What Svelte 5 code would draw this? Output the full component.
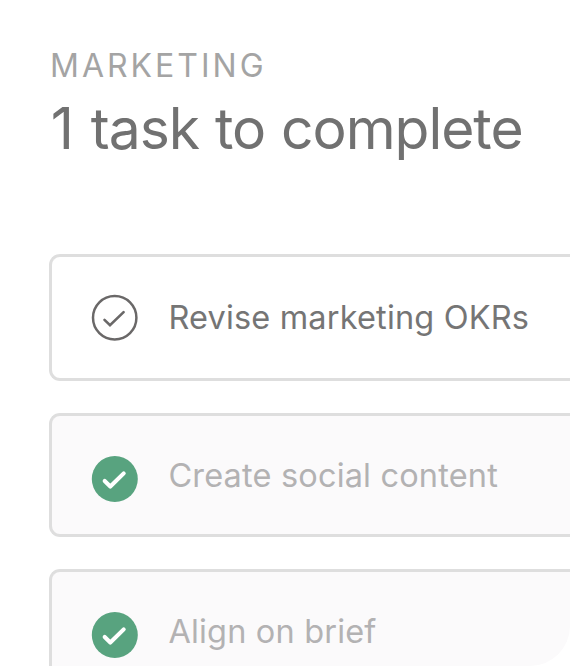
<script>
  const category = 'MARKETING';
  const tasks = [
    { title: 'Revise marketing OKRs', done: false },
    { title: 'Create social content', done: true },
    { title: 'Align on brief', done: true }
  ];
  const remaining = tasks.filter((task) => !task.done).length;
</script>

<main class="panel">
  <header>
    <p class="category">{category}</p>
    <h1><span class="count">{remaining}</span> task to complete</h1>
  </header>
  <ul class="tasks">
    {#each tasks as task}
      <li class="task" class:done={task.done}>
        <svg class="check" viewBox="0 0 46 46" aria-hidden="true">
          {#if task.done}
            <circle cx="22.8" cy="23" r="23" fill="#58a37f" />
            <path d="M12.7 25 18.3 30.5 31.7 17.4" stroke="#fff" stroke-width="4.1" stroke-linejoin="round" />
          {:else}
            <circle cx="22.7" cy="22.8" r="21.7" stroke="#6a6868" stroke-width="2.5" />
            <path d="M12.5 24.9 18 30.3 31.6 17.1" stroke="#6a6868" stroke-width="2.6" />
          {/if}
        </svg>
        <span class="title">{task.title}</span>
      </li>
    {/each}
  </ul>
</main>

<style>
  :global(body) {
    margin: 0;
    background: #fff;
  }
  .panel {
    box-sizing: border-box;
    width: 570px;
    height: 666px;
    padding: 46px 0 0 49px;
    overflow: hidden;
    background: #fff;
    border-bottom-right-radius: 40px;
    font-family: Inter, 'Liberation Sans', sans-serif;
  }
  header {
    height: 208px;
    padding-left: 1px;
  }
  .category {
    margin: 0;
    font-size: 32px;
    line-height: 40px;
    letter-spacing: 3px;
    color: #a4a4a4;
  }
  h1 {
    margin: 8px 0 0 0.7px;
    font-size: 57px;
    font-weight: 400;
    line-height: 70px;
    letter-spacing: -1.05px;
    word-spacing: 1px;
    white-space: nowrap;
    color: #717171;
  }
  .count {
    margin-right: 2px;
  }
  .tasks {
    display: flex;
    flex-direction: column;
    gap: 32px;
    margin: 0;
    padding: 0;
    list-style: none;
  }
  .task {
    display: flex;
    flex: none;
    align-items: center;
    box-sizing: border-box;
    height: 127px;
    padding-left: 40px;
    border: 3px solid #dedede;
    border-right: 0;
    border-radius: 11px 0 0 11px;
    color: #757575;
    font-size: 32.5px;
    font-weight: 400;
    line-height: 40px;
    letter-spacing: 0.17px;
    white-space: nowrap;
  }
  .task.done {
    height: 124px;
    padding-top: 8px;
    background: #fbfafb;
    color: #b3b2b3;
  }
  .check {
    flex: none;
    width: 46px;
    height: 46px;
    margin-right: 30.4px;
    fill: none;
    stroke-linecap: round;
    overflow: visible;
  }
  .title {
    margin-top: 0.5px;
  }
  .done .title {
    margin-top: -7px;
  }
</style>
